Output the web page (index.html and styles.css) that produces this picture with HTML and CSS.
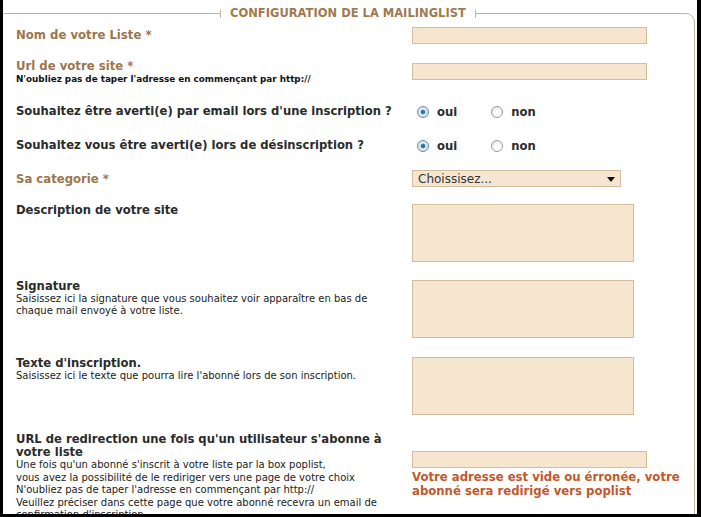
FILE: index.html
```html
<!DOCTYPE html>
<html lang="fr">
<head>
    <meta charset="UTF-8">
    <title>Configuration de la mailinglist</title>
    <link rel="stylesheet" href="styles.css">
</head>
<body>
    <div class="frame">
        <fieldset class="config">
            <legend><span class="legend-text">CONFIGURATION DE LA MAILINGLIST</span></legend>
            <div class="rows">
                <div class="row r-nom">
                    <div class="label-col"><label class="title" for="nom">Nom de votre Liste *</label></div>
                    <div class="field-col"><input type="text" id="nom" class="text"></div>
                </div>
                <div class="row r-url">
                    <div class="label-col">
                        <label class="title" for="url">Url de votre site *</label>
                        <div class="hint-bold">N'oubliez pas de taper l'adresse en commençant par http://</div>
                    </div>
                    <div class="field-col"><input type="text" id="url" class="text push5"></div>
                </div>
                <div class="row r-avert1">
                    <div class="label-col"><span class="label">Souhaitez être averti(e) par email lors d'une inscription ?</span></div>
                    <div class="field-col radios">
                        <input type="radio" name="avert1" id="a1oui" checked><label for="a1oui">oui</label>
                        <input type="radio" name="avert1" id="a1non" class="second"><label for="a1non">non</label>
                    </div>
                </div>
                <div class="row r-avert2">
                    <div class="label-col"><span class="label">Souhaitez vous être averti(e) lors de désinscription ?</span></div>
                    <div class="field-col radios">
                        <input type="radio" name="avert2" id="a2oui" checked><label for="a2oui">oui</label>
                        <input type="radio" name="avert2" id="a2non" class="second"><label for="a2non">non</label>
                    </div>
                </div>
                <div class="row r-cat">
                    <div class="label-col"><label class="title push1" for="cat">Sa categorie *</label></div>
                    <div class="field-col">
                        <div class="select">
                            <span>Choissisez...</span>
                            <svg width="8" height="5" viewBox="0 0 8 5"><path d="M0 0h8L4 5z" fill="#111"/></svg>
                        </div>
                    </div>
                </div>
                <div class="row r-desc">
                    <div class="label-col"><span class="label">Description de votre site</span></div>
                    <div class="field-col"><textarea class="area push1"></textarea></div>
                </div>
                <div class="row r-sign">
                    <div class="label-col">
                        <span class="label">Signature</span>
                        <div class="hint">Saisissez ici la signature que vous souhaitez voir apparaître en bas de<br>chaque mail envoyé à votre liste.</div>
                    </div>
                    <div class="field-col"><textarea class="area push1"></textarea></div>
                </div>
                <div class="row r-texte">
                    <div class="label-col">
                        <span class="label">Texte d'inscription.</span>
                        <div class="hint">Saisissez ici le texte que pourra lire l'abonné lors de son inscription.</div>
                    </div>
                    <div class="field-col"><textarea class="area push1"></textarea></div>
                </div>
                <div class="row r-redir">
                    <div class="label-col">
                        <span class="label tall">URL de redirection une fois qu'un utilisateur s'abonne à votre liste</span>
                        <div class="hint tall">Une fois qu'un abonné s'inscrit à votre liste par la box poplist,<br>vous avez la possibilité de le rediriger vers une page de votre choix<br>N'oubliez pas de taper l'adresse en commençant par http://<br>Veuillez préciser dans cette page que votre abonné recevra un email de<br>confirmation d'inscription.</div>
                    </div>
                    <div class="field-col">
                        <input type="text" class="text push18">
                        <div class="error">Votre adresse est vide ou érronée, votre<br>abonné sera redirigé vers poplist</div>
                    </div>
                </div>
            </div>
        </fieldset>
    </div>
</body>
</html>
```

FILE: styles.css
```css
body {
    margin: 0;
    background-color: #000;
    font-family: "DejaVu Sans", Verdana, sans-serif;
    color: #2b2b2b;
}
.frame {
    margin-left: 3px;
    width: 694px;
    height: 514px;
    background-color: #fff;
    overflow: hidden;
}
.config {
    margin: 6px 2px 0 -10px;
    padding: 0;
    border: 1px solid #c2b29b;
    border-radius: 0 9px 0 0;
    min-width: 0;
}
.config legend {
    margin-left: 226px;
    padding: 0;
    line-height: 14px;
    font-size: 11.5px;
    font-weight: bold;
    color: #a07a50;
}
.legend-text {
    padding: 0 9px;
}
.config legend::before, .config legend::after {
    content: "";
    display: inline-block;
    width: 1px;
    height: 8px;
    background-color: #c2b29b;
    vertical-align: -1px;
}
.rows {
    padding: 7px 0 0 22px;
}
.row {
    display: flex;
    align-items: flex-start;
}
.label-col {
    width: 396px;
    flex-shrink: 0;
}
.field-col {
    flex: 1;
}
.r-nom { margin-bottom: 14px; }
.r-url { margin-bottom: 19px; }
.r-avert1 { margin-bottom: 19px; }
.r-avert2 { margin-bottom: 17px; }
.r-cat { margin-bottom: 16px; }
.r-desc { margin-bottom: 17px; }
.r-sign { margin-bottom: 18px; }
.r-texte { margin-bottom: 18px; }

.title {
    display: block;
    font-size: 11.7px;
    line-height: 16px;
    font-weight: bold;
    color: #9b764c;
}
.label {
    display: block;
    font-size: 11.6px;
    line-height: 14px;
    font-weight: bold;
}
.label.tall {
    line-height: 13px;
    width: 392px;
}
.hint-bold {
    font-size: 8.8px;
    line-height: 11px;
    font-weight: bold;
    color: #111;
}
.hint {
    font-size: 10px;
    line-height: 12px;
    color: #222;
}
.hint.tall {
    line-height: 12.5px;
}
.push1 { margin-top: 1px; }
.push5 { margin-top: 5px; }
.push18 { margin-top: 18px; }

.text, .area, .select {
    display: block;
    box-sizing: border-box;
    margin-left: 0;
    background-color: #f7e6cf;
    border: 1px solid #d4bd9e;
    border-radius: 0;
    padding: 0;
    outline: none;
}
.text {
    width: 235px;
    height: 17px;
}
.area {
    width: 222px;
    height: 58px;
    resize: none;
}
.select {
    width: 209px;
    height: 17px;
    display: flex;
    align-items: center;
    justify-content: space-between;
    padding: 0 5px 0 5px;
    font-size: 12px;
    color: #333;
}
.select svg {
    margin-top: 2px;
}
.radios {
    display: flex;
    align-items: center;
    height: 14px;
    margin-top: 1px;
    font-size: 11.6px;
    font-weight: bold;
}
.radios input {
    appearance: none;
    width: 12px;
    height: 12px;
    margin: 0 8px 0 5px;
    border: 1px solid #9c9c9c;
    border-radius: 50%;
    background: radial-gradient(circle at 60% 65%, #fff 30%, #dcdcdc 100%);
    box-sizing: border-box;
}
.radios input:checked {
    border-color: #6b8aa3;
    background: radial-gradient(circle, #1d6091 0, #3d86b8 28%, #e6edf3 40%, #c7d3dc 100%);
}
.radios input.second {
    margin-left: 34px;
}
.error {
    margin-top: 2px;
    font-size: 11.7px;
    line-height: 14px;
    font-weight: bold;
    color: #c3582c;
}
```
